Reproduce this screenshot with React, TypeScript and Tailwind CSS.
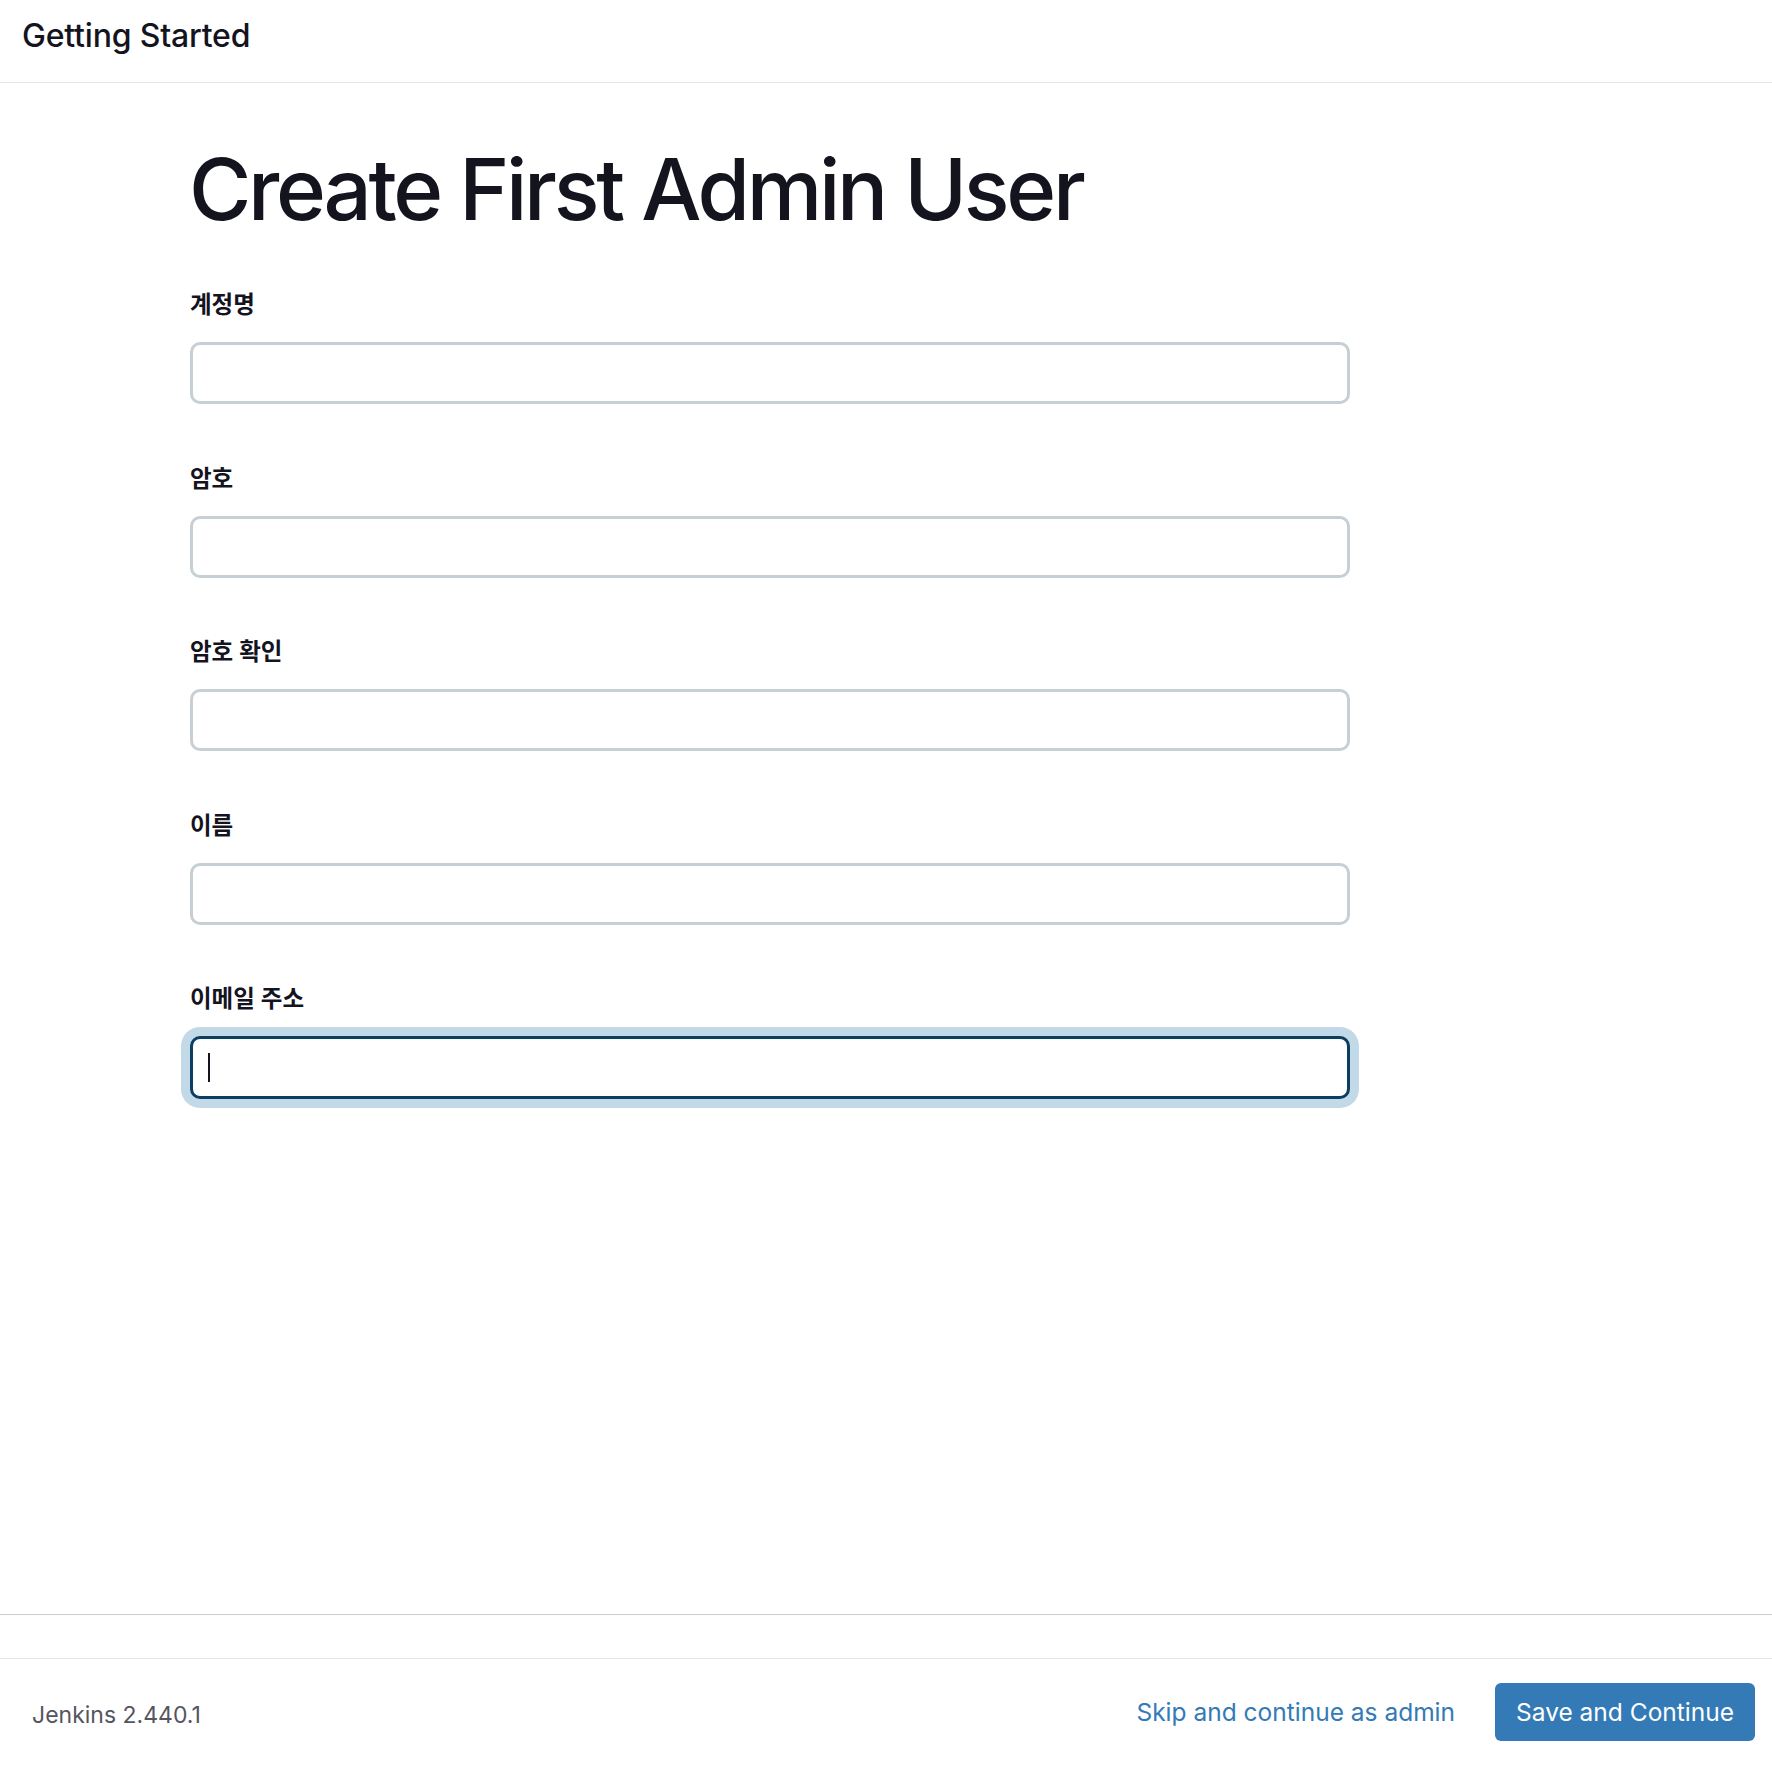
import React from 'react'

const fields = ['계정명', '암호', '암호 확인', '이름', '이메일 주소']

function Field({ label, focused }: { label: string; focused?: boolean }) {
  return (
    <div className="flex flex-col">
      <label className="h-[30px] leading-[30px] mt-[1px] text-[23.5px] font-semibold text-[#14141f]">
        {label}
      </label>
      <div className="mt-[22px] w-[1160px]">
        {focused ? (
          <div className="h-[63px] rounded-[10px] border-[3px] border-[#0b3e61] bg-white shadow-[0_0_0_9px_#c2d9e8] flex items-center pl-[15px]">
            <span className="block w-[2px] h-[29px] bg-[#14141f]" />
          </div>
        ) : (
          <div className="h-[62px] rounded-[10px] border-[3px] border-[#c6cfd4] bg-white" />
        )}
      </div>
    </div>
  )
}

export default function App() {
  return (
    <div
      className="h-[1765px] flex flex-col bg-white"
      style={{ fontFamily: 'Inter, "Noto Sans CJK KR", sans-serif' }}
    >
      {/* Header */}
      <header className="h-[83px] shrink-0 border-b border-[#e4e4e7] pl-[22px] pt-[20px]">
        <h2 className="text-[32px] leading-[32px] font-medium text-[#14141f] tracking-[-0.2px]">
          Getting Started
        </h2>
      </header>

      {/* Form */}
      <main className="flex-1 border-b border-[#cccccc] pl-[190px]">
        <h1 className="mt-[64px] text-[85px] leading-[85px] font-medium text-[#14141f] tracking-[-3.3px] -ml-[1px]">
          Create First Admin User
        </h1>
        <div className="mt-[57px] flex flex-col gap-[58.5px]">
          {fields.map((f, i) => (
            <Field key={f} label={f} focused={i === fields.length - 1} />
          ))}
        </div>
      </main>

      <div className="h-[43px] shrink-0" />

      {/* Footer */}
      <footer className="h-[107px] shrink-0 border-t border-[#e4e4e7] flex items-center justify-between pl-[32px] pr-[17px]">
        <span className="text-[23px] text-[#55555f] mt-[6px]">Jenkins 2.440.1</span>
        <div className="flex items-center gap-[40px]">
          <a className="text-[24.5px] text-[#337ab7] cursor-pointer">Skip and continue as admin</a>
          <button className="h-[58px] px-[21px] rounded-[6px] bg-[#337ab7] text-white text-[24.5px]">
            Save and Continue
          </button>
        </div>
      </footer>
    </div>
  )
}
